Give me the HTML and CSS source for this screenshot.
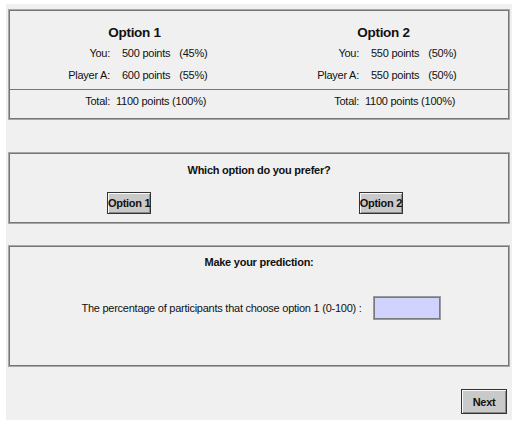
FILE: index.html
```html
<html>
  <head>
    <title>prediction</title>
    <link rel="stylesheet" href="styles.css">
  </head>
  <body>
    <div class="frame">
      <div class="panel summary">
        <div class="options">
          <div class="option">
            <h2>Option 1</h2>
            <div class="line"><span class="label">You:</span><span class="pts">500 points</span><span>(45%)</span></div>
            <div class="line"><span class="label">Player A:</span><span class="pts">600 points</span><span>(55%)</span></div>
          </div>
          <div class="option">
            <h2>Option 2</h2>
            <div class="line"><span class="label">You:</span><span class="pts">550 points</span><span>(50%)</span></div>
            <div class="line"><span class="label">Player A:</span><span class="pts">550 points</span><span>(50%)</span></div>
          </div>
        </div>
        <div class="options totals">
          <div class="line total"><span class="label">Total:</span><span>1100 points (100%)</span></div>
          <div class="line total"><span class="label">Total:</span><span>1100 points (100%)</span></div>
        </div>
      </div>

      <div class="panel choice">
        <h3>Which option do you prefer?</h3>
        <div class="buttons">
          <button class="btn">Option 1</button>
          <button class="btn">Option 2</button>
        </div>
      </div>

      <div class="panel predict">
        <h3>Make your prediction:</h3>
        <div class="field">
          <label for="pct">The percentage of participants that choose option 1 (0-100) :</label>
          <input id="pct" type="text">
        </div>
      </div>

      <div class="footer">
        <button class="btn next">Next</button>
      </div>
    </div>
  </body>
</html>
```

FILE: styles.css
```css
body {
  margin: 0;
  background: #ffffff;
  font-family: "Liberation Sans", Arial, sans-serif;
  font-size: 11px;
  letter-spacing: -0.25px;
  color: #111;
}
.frame {
  margin: 4px 0 0 6px;
  width: 502px;
  height: 411px;
  padding: 5px 2px 0 2px;
  background: #f0f0f0;
}
.panel {
  border: 1px solid #a8a8a8;
  box-shadow: inset 0 0 0 1px #767676;
  padding: 1px;
}
.options {
  display: grid;
  grid-template-columns: 1fr 1fr;
}
.option h2 {
  margin: 14px 0 1px 0;
  font-size: 13.5px;
  letter-spacing: -0.3px;
  line-height: 16px;
  text-align: center;
}
.line {
  display: flex;
  line-height: 22px;
}
.line .label {
  width: 100px;
  text-align: right;
  margin-right: 12px;
}
.line .pts {
  margin-right: 9px;
}
.option {
  padding-bottom: 3px;
}
.totals {
  border-top: 1px solid #767676;
  padding-bottom: 6px;
}
.total .label {
  margin-right: 6px;
}
.choice {
  margin-top: 32px;
  height: 68px;
}
h3 {
  margin: 0;
  font-size: 11px;
  text-align: center;
}
.choice h3 {
  margin-top: 9px;
  line-height: 14px;
}
.buttons {
  display: flex;
  justify-content: space-between;
  padding: 0 105px 0 97px;
  margin-top: 15px;
}
.btn {
  font-family: "Liberation Sans", Arial, sans-serif;
  font-size: 11px;
  font-weight: bold;
  letter-spacing: -0.3px;
  color: #111;
  background: #c9c9c9;
  border: 1px solid #333;
  box-shadow: inset 1px 1px 0 #fafafa, inset -1px -1px 0 #8a8a8a;
  height: 22px;
  padding: 0;
}
.predict {
  margin-top: 21px;
  height: 118px;
}
.predict h3 {
  margin-top: 8px;
  line-height: 14px;
}
.field {
  display: flex;
  justify-content: center;
  align-items: center;
  gap: 11px;
  margin-top: 27px;
  padding-left: 4px;
}
.field input {
  width: 68px;
  height: 24px;
  box-sizing: border-box;
  background: #d2d2ff;
  border: 1px solid #9a9a9a;
  box-shadow: inset 0 0 0 1px #7a7a7a;
}
.footer {
  display: flex;
  justify-content: flex-end;
  margin-top: 22px;
  padding-right: 3px;
}
.next {
  width: 46px;
  height: 25px;
}
```
